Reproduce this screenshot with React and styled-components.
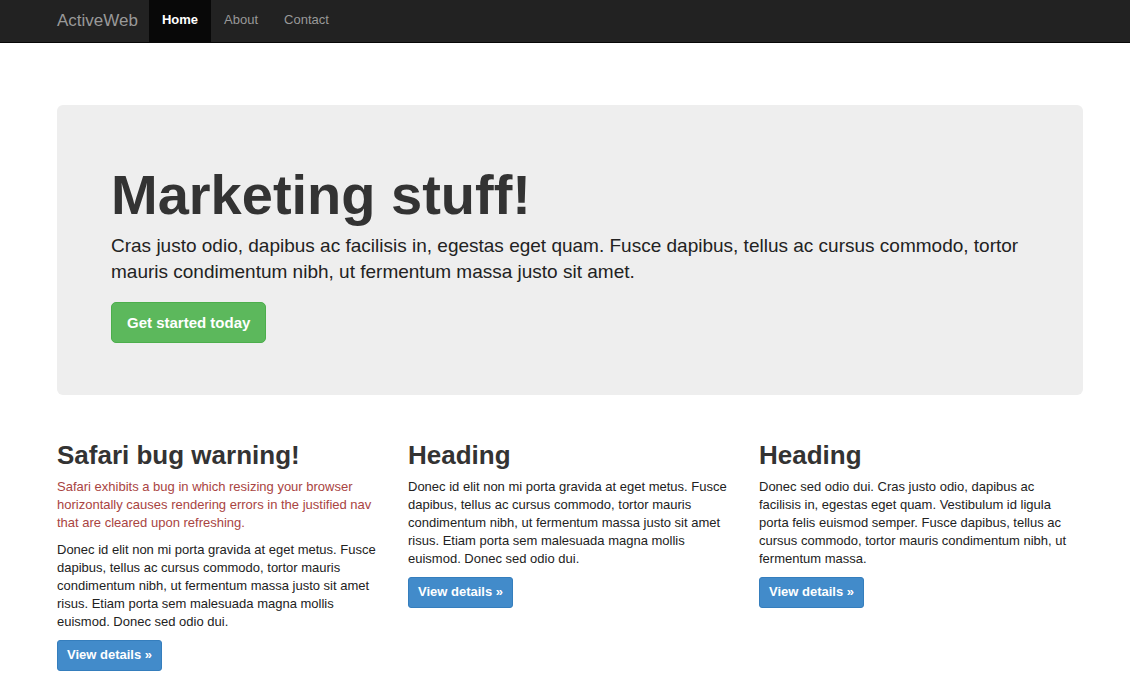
import React from "react";
import styled, { createGlobalStyle } from "styled-components";

const GlobalStyle = createGlobalStyle`
  *, *::before, *::after { box-sizing: border-box; }
  body {
    margin: 0;
    background: #fff;
    color: #222;
    font-family: "Liberation Sans", Arial, sans-serif;
    font-size: 13px;
    line-height: 18px;
  }
`;

const Navbar = styled.header`
  background: #222;
  border-bottom: 1px solid #080808;
`;

const Container = styled.div`
  max-width: 1056px;
  margin: 0 auto;
  padding: 0 10px 0 20px;
`;

const NavRow = styled.nav`
  display: flex;
  align-items: stretch;
  height: 42px;
`;

const Brand = styled.a`
  padding: 0 11px 0 0;
  font-size: 17px;
  line-height: 41px;
  color: #999;
  text-decoration: none;
`;

const NavLink = styled.a`
  padding: 0 13px;
  line-height: 40px;
  text-decoration: none;
  color: ${(p) => (p.$active ? "#fff" : "#999")};
  font-weight: ${(p) => (p.$active ? 700 : 400)};
  background: ${(p) => (p.$active ? "#080808" : "transparent")};
`;

const Hero = styled.section`
  margin-top: 62px;
  padding: 60px 54px 52px;
  background: #eee;
  border-radius: 6px;
`;

const HeroTitle = styled.h1`
  margin: 0 0 8px;
  font-size: 56px;
  line-height: 60px;
  font-weight: 700;
  color: #333;
`;

const Lead = styled.p`
  margin: 0 0 17px;
  font-size: 19px;
  line-height: 26px;
`;

const Button = styled.button`
  display: block;
  border: 1px solid ${(p) => (p.$large ? "#4cae4c" : "#357ebd")};
  border-radius: ${(p) => (p.$large ? 5 : 3)}px;
  background: ${(p) => (p.$large ? "#5cb85c" : "#428bca")};
  color: #fff;
  font-family: inherit;
  font-weight: 700;
  font-size: ${(p) => (p.$large ? 15 : 13)}px;
  line-height: ${(p) => (p.$large ? 21 : 18)}px;
  padding: ${(p) => (p.$large ? "9px 15px" : "5px 9px 6px")};
`;

const Columns = styled.main`
  display: grid;
  grid-template-columns: repeat(3, 1fr);
  gap: 27px;
  margin-top: 45px;
  padding-bottom: 16px;
`;

const Heading = styled.h2`
  margin: 0 0 8px;
  font-size: 26px;
  line-height: 30px;
  font-weight: 700;
  color: #333;
`;

const Text = styled.p`
  margin: 0 0 9px;
  padding-right: 4px;
  color: ${(p) => (p.$danger ? "#a94442" : "inherit")};
`;

const donec =
  "Donec id elit non mi porta gravida at eget metus. Fusce dapibus, tellus ac cursus commodo, tortor mauris condimentum nibh, ut fermentum massa justo sit amet risus. Etiam porta sem malesuada magna mollis euismod. Donec sed odio dui.";

const features = [
  {
    title: "Safari bug warning!",
    warning:
      "Safari exhibits a bug in which resizing your browser horizontally causes rendering errors in the justified nav that are cleared upon refreshing.",
    text: donec,
  },
  { title: "Heading", text: donec },
  {
    title: "Heading",
    text: "Donec sed odio dui. Cras justo odio, dapibus ac facilisis in, egestas eget quam. Vestibulum id ligula porta felis euismod semper. Fusce dapibus, tellus ac cursus commodo, tortor mauris condimentum nibh, ut fermentum massa.",
  },
];

export default function App() {
  return (
    <>
      <GlobalStyle />
      <Navbar>
        <Container>
          <NavRow>
            <Brand href="#">ActiveWeb</Brand>
            <NavLink href="#" $active>Home</NavLink>
            <NavLink href="#about">About</NavLink>
            <NavLink href="#contact">Contact</NavLink>
          </NavRow>
        </Container>
      </Navbar>
      <Container>
        <Hero>
          <HeroTitle>Marketing stuff!</HeroTitle>
          <Lead>
            Cras justo odio, dapibus ac facilisis in, egestas eget quam. Fusce
            dapibus, tellus ac cursus commodo, tortor mauris condimentum nibh,
            ut fermentum massa justo sit amet.
          </Lead>
          <Button type="button" $large>Get started today</Button>
        </Hero>
        <Columns>
          {features.map((f, i) => (
            <section key={i}>
              <Heading>{f.title}</Heading>
              {f.warning && <Text $danger>{f.warning}</Text>}
              <Text>{f.text}</Text>
              <Button type="button">View details »</Button>
            </section>
          ))}
        </Columns>
      </Container>
    </>
  );
}
